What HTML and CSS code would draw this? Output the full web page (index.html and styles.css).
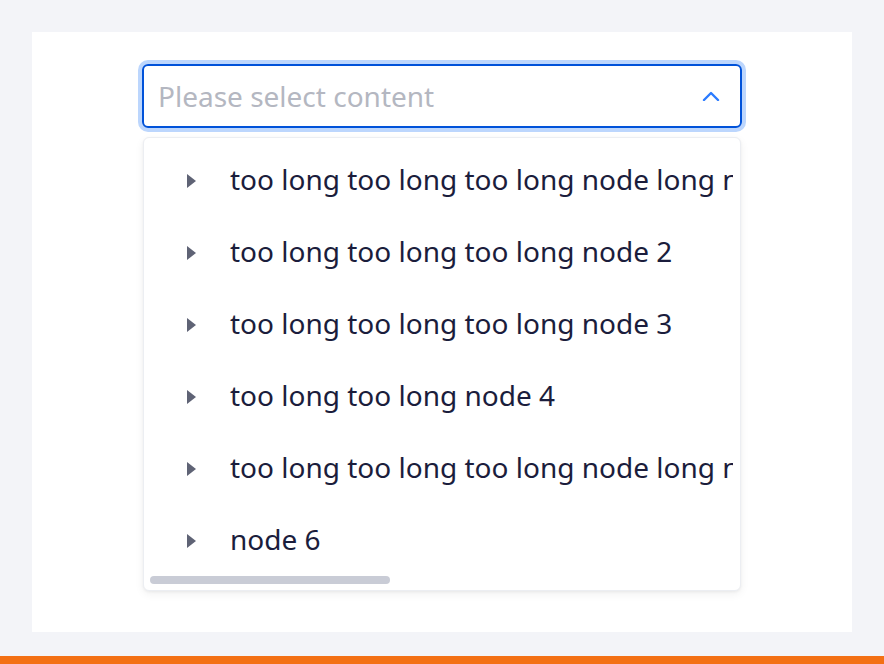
FILE: index.html
```html
<!DOCTYPE html>
<html lang="en">
<head>
<meta charset="utf-8">
<link rel="stylesheet" href="styles.css">
</head>
<body>
<div class="panel">
  <div class="select-wrap">
    <div class="select">
      <span class="placeholder">Please select content</span>
      <svg class="chevron" width="18" height="10" viewBox="0 0 18 10"><path d="M2 9 L9 2 L16 9" fill="none" stroke="#2b7bff" stroke-width="2.4" stroke-linecap="round" stroke-linejoin="round"/></svg>
    </div>
    <div class="dropdown">
      <div class="list">
        <div class="row"><span class="caret"></span><span class="label">too long too long too long node long node long node</span></div>
        <div class="row"><span class="caret"></span><span class="label">too long too long too long node 2</span></div>
        <div class="row"><span class="caret"></span><span class="label">too long too long too long node 3</span></div>
        <div class="row"><span class="caret"></span><span class="label">too long too long node 4</span></div>
        <div class="row"><span class="caret"></span><span class="label">too long too long too long node long node long node</span></div>
        <div class="row"><span class="caret"></span><span class="label">node 6</span></div>
      </div>
      <div class="scrollbar"><div class="thumb"></div></div>
    </div>
  </div>
</div>
<div class="accent"></div>
</body>
</html>
```
FILE: styles.css
```css
html, body {
  margin: 0;
  padding: 0;
}
body {
  background: #f3f4f8;
  width: 884px;
  height: 664px;
  overflow: hidden;
  font-family: "Noto Sans", "Liberation Sans", sans-serif;
  display: flex;
  flex-direction: column;
}
.panel {
  margin: 32px 32px 0 32px;
  height: 600px;
  background: #ffffff;
  padding: 32px 0 0 110px;
  box-sizing: border-box;
}
.select-wrap {
  width: 600px;
}
.select {
  height: 64px;
  box-sizing: border-box;
  border: 2px solid #0052d9;
  border-radius: 6px;
  box-shadow: 0 0 0 4px #bcd6fd;
  display: flex;
  align-items: center;
  padding: 0 20px 0 14px;
}
.placeholder {
  flex: 1;
  font-size: 28px;
  line-height: 36px;
  color: #b4b7c1;
  white-space: nowrap;
}
.chevron {
  display: block;
}
.dropdown {
  margin: 9px 1px 0 1px;
  height: 454px;
  box-sizing: border-box;
  background: #fff;
  border-radius: 6px;
  border: 1px solid #eceef2;
  box-shadow: 0 3px 10px rgba(0, 0, 0, 0.06), 0 1px 3px rgba(0, 0, 0, 0.05);
  padding: 7px 7px 0 6px;
  display: flex;
  flex-direction: column;
}
.list {
  overflow: hidden;
}
.row {
  height: 72px;
  display: flex;
  align-items: center;
  padding-left: 37px;
  white-space: nowrap;
}
.caret {
  width: 0;
  height: 0;
  border-top: 7px solid transparent;
  border-bottom: 7px solid transparent;
  border-left: 9px solid #5f6375;
  flex: none;
}
.label {
  margin-left: 34px;
  font-size: 28px;
  line-height: 36px;
  color: #1b1d3c;
  position: relative;
  top: -2px;
}
.scrollbar {
  margin-top: -1px;
  height: 8px;
}
.thumb {
  width: 240px;
  height: 8px;
  border-radius: 4px;
  background: #c9ccd6;
}
.accent {
  margin-top: 24px;
  height: 8px;
  background: #f37014;
}
```
